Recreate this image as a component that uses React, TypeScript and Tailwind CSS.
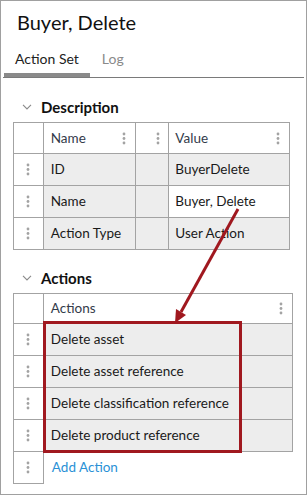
import React from 'react';

const Kebab = () => (
  <svg width="4" height="13" viewBox="0 0 4 13" className="shrink-0">
    <circle cx="2" cy="2" r="1.4" fill="#a3a3a3" />
    <circle cx="2" cy="6.5" r="1.4" fill="#a3a3a3" />
    <circle cx="2" cy="11" r="1.4" fill="#a3a3a3" />
  </svg>
);

const Chevron = () => (
  <svg width="10" height="6" viewBox="0 0 10 6" className="shrink-0">
    <polyline points="1,0.8 5,5 9,0.8" fill="none" stroke="#8a8a8a" strokeWidth="1.1" />
  </svg>
);

const SectionHead = ({ title }: { title: string }) => (
  <div className="flex h-[30px] items-center pl-[21px]">
    <Chevron />
    <span className="ml-[9px] text-[15px] font-bold text-[#111]">{title}</span>
  </div>
);

const cell = 'border border-[#a3a3a3] p-0 align-middle';

export default function App() {
  const descRows = [
    { name: 'ID', value: 'BuyerDelete', white: false },
    { name: 'Name', value: 'Buyer, Delete', white: true },
    { name: 'Action Type', value: 'User Action', white: false },
  ];
  const actions = [
    'Delete asset',
    'Delete asset reference',
    'Delete classification reference',
    'Delete product reference',
  ];

  return (
    <div
      className="relative h-[495px] w-[307px] overflow-hidden border border-[#a0a0a0] bg-white text-[13.5px] leading-[21px] text-[#1a1a1a]"
      style={{ fontFamily: 'Lato, "Open Sans", sans-serif' }}
    >
      <div className="pl-[16px] pt-[8px] text-[20px] leading-[26px] text-[#111]">Buyer, Delete</div>

      {/* Tabs */}
      <div className="mx-[2px] mt-[8px] flex border-b border-[#7a7a7a]">
        <div className="ml-[1px] border-b-4 border-[#8a8a8a] px-[11px] pb-[4px] pt-[5px] text-[14px] text-[#222]">
          Action Set
        </div>
        <div className="px-[12px] pb-[8px] pt-[5px] text-[14px] text-[#8a8a8a]">Log</div>
      </div>

      {/* Description */}
      <div className="mt-[14px]">
        <SectionHead title="Description" />
      </div>
      <div className="ml-[12px]">
        <table className="border-collapse" style={{ width: 277 }}>
          <colgroup>
            <col style={{ width: 30 }} />
            <col style={{ width: 93 }} />
            <col style={{ width: 33 }} />
            <col style={{ width: 121 }} />
          </colgroup>
          <tbody>
            <tr className="h-[31px]">
              <td className={cell}></td>
              <td className={cell}>
                <div className="flex items-center justify-between pl-[7px] pr-[9px] text-[#333b4a]">
                  Name <Kebab />
                </div>
              </td>
              <td className={cell}>
                <div className="flex items-center pl-[20px]">
                  <Kebab />
                </div>
              </td>
              <td className={cell}>
                <div className="flex items-center justify-between pl-[6px] pr-[9px] text-[#333b4a]">
                  Value <Kebab />
                </div>
              </td>
            </tr>
            {descRows.map((r) => (
              <tr key={r.name} className="h-[32px]">
                <td className={cell}>
                  <div className="flex justify-center">
                    <Kebab />
                  </div>
                </td>
                <td className={`${cell} bg-[#ededed] pl-[7px]`}>{r.name}</td>
                <td className={`${cell} bg-[#ededed]`}></td>
                <td className={`${cell} pl-[6px] ${r.white ? 'bg-white' : 'bg-[#ededed]'}`}>{r.value}</td>
              </tr>
            ))}
          </tbody>
        </table>
      </div>

      {/* Actions */}
      <div className="mt-[13px]">
        <SectionHead title="Actions" />
      </div>
      <div className="ml-[12px]">
        <table className="border-collapse" style={{ width: 280 }}>
          <colgroup>
            <col style={{ width: 30 }} />
            <col style={{ width: 250 }} />
          </colgroup>
          <tbody>
            <tr className="h-[30px]">
              <td className={cell}></td>
              <td className={cell}>
                <div className="flex items-center justify-between pl-[7px] pr-[9px] text-[#333b4a]">
                  Actions <Kebab />
                </div>
              </td>
            </tr>
            {actions.map((a) => (
              <tr key={a} className="h-[32px]">
                <td className={cell}>
                  <div className="flex justify-center">
                    <Kebab />
                  </div>
                </td>
                <td className={`${cell} bg-[#ededed] pl-[7px]`}>{a}</td>
              </tr>
            ))}
            <tr className="h-[32px]">
              <td className={cell}>
                <div className="flex justify-center">
                  <Kebab />
                </div>
              </td>
              <td className="border-0 p-0 pl-[8px] align-middle text-[#2a91d6]">Add Action</td>
            </tr>
          </tbody>
        </table>
      </div>

      {/* Annotation overlay */}
      <div className="pointer-events-none absolute left-[42px] top-[320px] h-[132px] w-[199px] border-[3px] border-[#a0181f]" />
      <svg className="pointer-events-none absolute left-0 top-0" width="307" height="495">
        <line x1="237" y1="208" x2="180" y2="311" stroke="#a0181f" strokeWidth="3" />
        <polygon points="174,322 185,314 175,308" fill="#a0181f" />
      </svg>
    </div>
  );
}
